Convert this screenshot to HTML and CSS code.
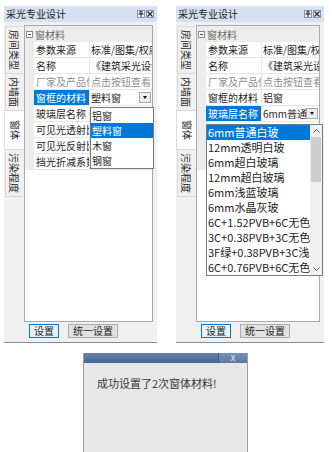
FILE: index.html
```html
<!DOCTYPE html>
<html lang="zh-CN">
<head>
  <meta charset="UTF-8">
  <title>采光专业设计</title>
  <link rel="stylesheet" href="styles.css">
</head>
<body>

<div class="panels">

  <!-- 窗框材料下拉 -->
  <div class="panel panel-left">
    <div class="title">
      <span>采光专业设计</span>
      <span class="tools">
        <span class="tbtn"><svg width="6" height="6" viewBox="0 0 6 6"><path d="M2 0.5h2v2.5H2z M0.5 3h5 M3 3v3" fill="none" stroke="#333" stroke-width="1"/></svg></span>
        <span class="tbtn"><svg width="6" height="6" viewBox="0 0 6 6"><path d="M0.5 0.5l5 5M5.5 0.5l-5 5" stroke="#222" stroke-width="1.2"/></svg></span>
      </span>
    </div>
    <div class="body">
      <div class="tabs">
        <div class="tab">房间类型</div>
        <div class="tab">内墙面</div>
        <div class="tab active">窗体</div>
        <div class="tab">污染程度</div>
      </div>
      <div class="content">
        <div class="grid">
          <div class="cat"><span class="minus"></span>窗材料</div>
          <div class="prop"><span class="m"></span><span class="name">参数来源</span><span class="val">标准/图集/权威数据</span></div>
          <div class="prop"><span class="m"></span><span class="name">名称</span><span class="val">《建筑采光设计标准》</span></div>
          <div class="prop off"><span class="m"></span><span class="name">厂家及产品信息</span><span class="val">点击按钮查看</span></div>
          <div class="prop sel"><span class="m"></span><span class="name">窗框的材料</span><span class="val combo"><span class="txt">塑料窗</span><span class="drop"></span></span></div>
          <div class="prop"><span class="m"></span><span class="name">玻璃层名称</span><span class="val">铝窗</span></div>
          <div class="prop"><span class="m"></span><span class="name">可见光透射比</span><span class="val"></span></div>
          <div class="prop"><span class="m"></span><span class="name">可见光反射比</span><span class="val"></span></div>
          <div class="prop"><span class="m"></span><span class="name">挡光折减系数</span><span class="val"></span></div>

          <ul class="list list-frame">
            <li>铝窗</li>
            <li class="on">塑料窗</li>
            <li>木窗</li>
            <li>钢窗</li>
          </ul>
        </div>
        <div class="btns">
          <button class="btn focus">设置</button>
          <button class="btn">统一设置</button>
        </div>
      </div>
    </div>
  </div>

  <!-- 玻璃层下拉 -->
  <div class="panel panel-right">
    <div class="title">
      <span>采光专业设计</span>
      <span class="tools">
        <span class="tbtn"><svg width="6" height="6" viewBox="0 0 6 6"><path d="M2 0.5h2v2.5H2z M0.5 3h5 M3 3v3" fill="none" stroke="#333" stroke-width="1"/></svg></span>
        <span class="tbtn"><svg width="6" height="6" viewBox="0 0 6 6"><path d="M0.5 0.5l5 5M5.5 0.5l-5 5" stroke="#222" stroke-width="1.2"/></svg></span>
      </span>
    </div>
    <div class="body">
      <div class="tabs">
        <div class="tab">房间类型</div>
        <div class="tab">内墙面</div>
        <div class="tab active">窗体</div>
        <div class="tab">污染程度</div>
      </div>
      <div class="content">
        <div class="grid">
          <div class="cat"><span class="minus"></span>窗材料</div>
          <div class="prop"><span class="m"></span><span class="name">参数来源</span><span class="val">标准/图集/权威数据</span></div>
          <div class="prop"><span class="m"></span><span class="name">名称</span><span class="val">《建筑采光设计标准》</span></div>
          <div class="prop off"><span class="m"></span><span class="name">厂家及产品信息</span><span class="val">点击按钮查看</span></div>
          <div class="prop"><span class="m"></span><span class="name">窗框的材料</span><span class="val">铝窗</span></div>
          <div class="prop sel"><span class="m"></span><span class="name">玻璃层名称</span><span class="val combo"><span class="txt">6mm普通白玻</span><span class="drop"></span></span></div>
          <div class="prop"><span class="m"></span><span class="name">可见光透射比</span><span class="val"></span></div>
          <div class="prop"><span class="m"></span><span class="name">可见光反射比</span><span class="val"></span></div>
          <div class="prop"><span class="m"></span><span class="name">挡光折减系数</span><span class="val"></span></div>

          <div class="list list-glass">
            <ul class="items">
              <li class="on">6mm普通白玻</li>
              <li>12mm透明白玻</li>
              <li>6mm超白玻璃</li>
              <li>12mm超白玻璃</li>
              <li>6mm浅蓝玻璃</li>
              <li>6mm水晶灰玻</li>
              <li>6C+1.52PVB+6C无色透明</li>
              <li>3C+0.38PVB+3C无色透明</li>
              <li>3F绿+0.38PVB+3C浅绿</li>
              <li>6C+0.76PVB+6C无色透明</li>
            </ul>
            <div class="sbar">
              <span class="arrow"><svg width="7" height="4" viewBox="0 0 7 4"><path d="M0.5 3.5l3-3 3 3" fill="none" stroke="#555" stroke-width="1"/></svg></span>
              <span class="thumb"></span>
              <span class="track"></span>
              <span class="arrow"><svg width="7" height="4" viewBox="0 0 7 4"><path d="M0.5 0.5l3 3 3-3" fill="none" stroke="#555" stroke-width="1"/></svg></span>
            </div>
          </div>
        </div>
        <div class="btns">
          <button class="btn focus">设置</button>
          <button class="btn">统一设置</button>
        </div>
      </div>
    </div>
  </div>

</div>

<div class="dialog">
  <div class="dlg-title"><span class="dlg-x">X</span></div>
  <div class="dlg-msg">成功设置了2次窗体材料!</div>
</div>

</body>
</html>
```

FILE: styles.css
```css
* {
  box-sizing: border-box;
}
body {
  margin: 0;
  width: 332px;
  height: 452px;
  overflow: hidden;
  background: #fff;
  font-family: "Noto Sans CJK SC", "Noto Sans", sans-serif;
  font-size: 10px;
  color: #1e1e1e;
}
.panels {
  display: flex;
  gap: 19px;
  padding: 6px 0 0 4px;
}
.panel {
  height: 337px;
  display: flex;
  flex-direction: column;
  background: #f0f0f0;
  border-bottom: 1px solid #8a8a8a;
}
.panel-left {
  width: 153px;
}
.panel-right {
  width: 148px;
}
.title {
  height: 16px;
  line-height: 16px;
  display: flex;
  align-items: center;
  justify-content: space-between;
  padding: 0 3px 0 2px;
  background: #d5e0f0;
  white-space: nowrap;
}
.tools {
  display: flex;
  gap: 1px;
}
.tbtn {
  width: 8px;
  height: 8px;
  display: flex;
  align-items: center;
  justify-content: center;
  background: #eef2f8;
  border: 1px solid #8895a8;
}
.body {
  flex: 1;
  display: flex;
  padding-top: 3px;
}
.tabs {
  width: 20px;
  display: flex;
  flex-direction: column;
  padding-top: 1px;
}
.tab {
  width: 18px;
  margin-left: 1px;
  padding: 3px 0;
  writing-mode: vertical-rl;
  text-orientation: sideways;
  line-height: 18px;
  text-align: center;
  color: #2a2a2a;
  border: 1px solid #d9d9d9;
  border-right: none;
  margin-bottom: -1px;
}
.tab.active {
  width: 20px;
  margin-left: 0;
  padding: 9px 0;
  background: #fff;
  position: relative;
  z-index: 1;
}
.content {
  flex: 1;
  display: flex;
  flex-direction: column;
  padding-right: 4px;
}
.grid {
  flex: 1;
  position: relative;
  background: #fff;
  border: 1px solid #a9a9a9;
}
.cat {
  height: 16px;
  display: flex;
  align-items: center;
  padding-left: 1px;
  background: #ececec;
  color: #6a6a6a;
}
.minus {
  width: 7px;
  height: 7px;
  margin-right: 2px;
  border: 1px solid #8a8a8a;
  background: #fff;
  display: flex;
  align-items: center;
  justify-content: center;
}
.minus::after {
  content: "";
  width: 3px;
  height: 1px;
  background: #444;
}
.prop {
  display: grid;
  grid-template-columns: 9px 55px 1fr;
  height: 16px;
  line-height: 15px;
}
.m {
  background: #ececec;
}
.name,
.val {
  overflow: hidden;
  white-space: nowrap;
  border-bottom: 1px solid #e6e6e6;
}
.name {
  padding-left: 2px;
}
.val {
  padding-left: 1px;
  border-left: 1px solid #e6e6e6;
}
.prop.off .name,
.prop.off .val {
  color: #8c8c8c;
}
.prop.sel .name {
  background: #0078d7;
  color: #fff;
}
.combo {
  display: flex;
  align-items: center;
  padding-right: 1px;
}
.combo .txt {
  flex: 1;
  overflow: hidden;
}
.drop {
  width: 12px;
  height: 11px;
  display: flex;
  align-items: center;
  justify-content: center;
  background: #ececec;
  border: 1px solid #a8a8a8;
}
.drop::after {
  content: "";
  border-left: 2.5px solid transparent;
  border-right: 2.5px solid transparent;
  border-top: 3px solid #111;
}
.list {
  position: absolute;
  margin: 0;
  padding: 0;
  list-style: none;
  background: #fff;
  border: 1px solid #7a7a7a;
  z-index: 2;
}
.list li {
  height: 15px;
  line-height: 15px;
  white-space: nowrap;
  overflow: hidden;
}
.list li.on {
  background: #0078d7;
  color: #fff;
}
.list-frame {
  left: 65px;
  top: 81px;
  width: 64px;
}
.list-frame li {
  padding-left: 1px;
}
.list-glass {
  left: 9px;
  top: 98px;
  width: 117px;
  display: flex;
  font-size: 11px;
}
.items {
  flex: 1;
  min-width: 0;
  margin: 0;
  padding: 0;
  list-style: none;
}
.items li {
  padding-left: 1px;
}
.sbar {
  width: 12px;
  display: flex;
  flex-direction: column;
  background: #f0f0f0;
}
.arrow {
  height: 12px;
  display: flex;
  align-items: center;
  justify-content: center;
}
.thumb {
  height: 45px;
  margin: 0 1px;
  background: #cdcdcd;
}
.track {
  flex: 1;
}
.btns {
  display: flex;
  gap: 9px;
  padding: 2px 0 4px 5px;
}
.btn {
  height: 14px;
  padding: 0 4px;
  font-family: inherit;
  font-size: 10px;
  line-height: 12px;
  color: #1e1e1e;
  background: #e1e1e1;
  border: 1px solid #adadad;
  border-radius: 0;
}
.btn.focus {
  background: #e5f1fb;
  border-color: #0078d7;
}
.dialog {
  width: 165px;
  height: 100px;
  margin: 10px 0 0 83px;
  background: #e7e7e7;
  border: 1px solid #9c9c9c;
  border-top: none;
}
.dlg-title {
  height: 10px;
  display: flex;
  justify-content: flex-end;
  background: linear-gradient(#6480ab, #4a6793);
}
.dlg-x {
  width: 29px;
  font-size: 8px;
  line-height: 10px;
  text-align: center;
  color: #e8eef6;
  background: linear-gradient(#7690b6, #5c79a3);
  border-left: 1px solid #3f5a84;
}
.dlg-msg {
  padding: 14px 0 0 13px;
  font-size: 11px;
  line-height: 13px;
  color: #3a3a3a;
}
```
